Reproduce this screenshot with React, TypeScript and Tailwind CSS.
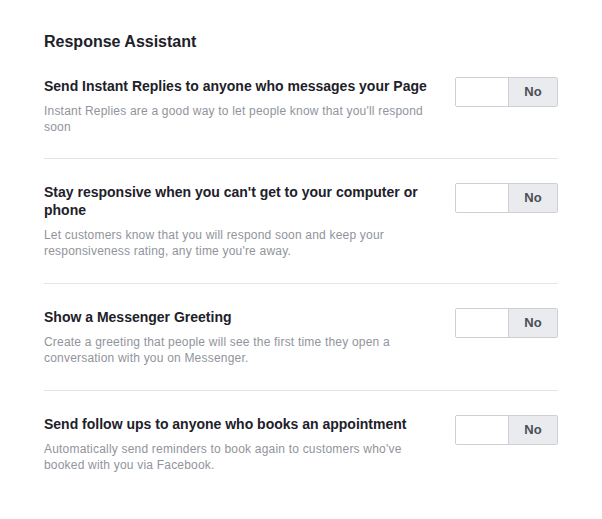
const rows = [
  {
    title: "Send Instant Replies to anyone who messages your Page",
    desc: "Instant Replies are a good way to let people know that you'll respond soon",
  },
  {
    title: "Stay responsive when you can't get to your computer or phone",
    desc: "Let customers know that you will respond soon and keep your responsiveness rating, any time you're away.",
  },
  {
    title: "Show a Messenger Greeting",
    desc: "Create a greeting that people will see the first time they open a conversation with you on Messenger.",
  },
  {
    title: "Send follow ups to anyone who books an appointment",
    desc: "Automatically send reminders to book again to customers who've booked with you via Facebook.",
  },
];

function Toggle() {
  return (
    <div className="flex h-[30px] w-[103px] shrink-0 overflow-hidden rounded-[2px] border border-[#ccd0d5]">
      <div className="w-[52px] bg-white" />
      <div className="flex flex-1 items-center justify-center border-l border-[#ccd0d5] bg-[#e9ebee] text-[13px] font-bold text-[#4b4f56]">
        No
      </div>
    </div>
  );
}

export default function App() {
  return (
    <div className="min-h-screen bg-white px-[44px] pt-[32px] font-['Liberation_Sans',Arial,sans-serif]">
      <h1 className="text-[16px] font-bold leading-[20px] text-[#1d2129]">Response Assistant</h1>
      <div className="mt-[25px] w-[514px]">
        {rows.map((row, i) => (
          <div
            key={i}
            className={`flex items-start justify-between ${i > 0 ? "border-t border-[#e5e5e5] pt-[24px] pb-[24px]" : "pb-[23px]"}`}
          >
            <div className="w-[395px]">
              <div className="text-[14px] font-bold leading-[18px] text-[#1d2129]">{row.title}</div>
              <div className="mt-[8px] text-[12px] leading-[16px] tracking-[0.2px] text-[#90949c]">{row.desc}</div>
            </div>
            <Toggle />
          </div>
        ))}
      </div>
    </div>
  );
}
